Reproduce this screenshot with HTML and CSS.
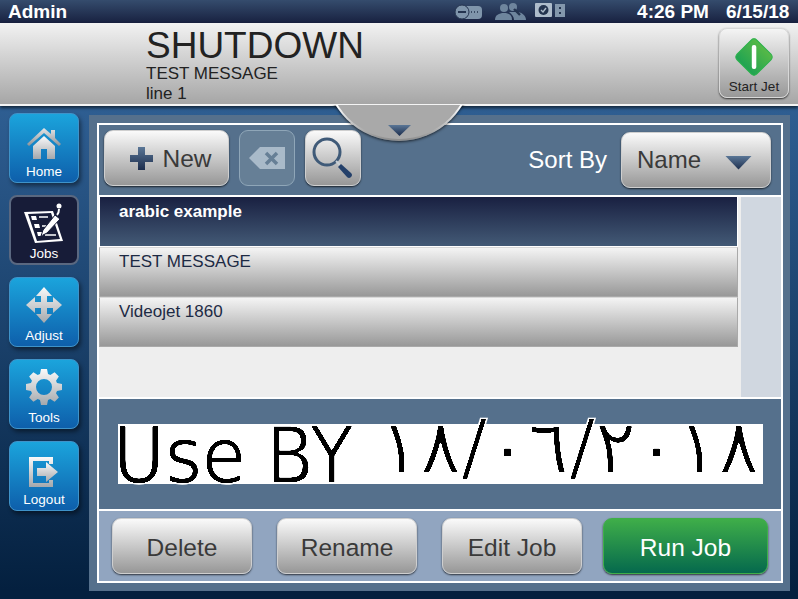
FILE: index.html
```html
<!DOCTYPE html>
<html lang="en">
<head>
    <meta charset="UTF-8">
    <title>Jobs</title>
    <link rel="stylesheet" href="styles.css">
</head>
<body>
    <svg class="defs" aria-hidden="true">
        <defs>
            <linearGradient id="silver" x1="0" y1="0" x2="0" y2="1">
                <stop offset="0" stop-color="#fafafa"/>
                <stop offset="1" stop-color="#a4a8ac"/>
            </linearGradient>
            <linearGradient id="roof" x1="0" y1="0" x2="0" y2="1">
                <stop offset="0" stop-color="#e4e6e8"/>
                <stop offset="1" stop-color="#8e9398"/>
            </linearGradient>
            <linearGradient id="navy" x1="0" y1="0" x2="0" y2="1">
                <stop offset="0" stop-color="#5a7696"/>
                <stop offset="1" stop-color="#1b2c4c"/>
            </linearGradient>
            <linearGradient id="jet" x1="0" y1="0" x2="0" y2="1">
                <stop offset="0" stop-color="#57b947"/>
                <stop offset="1" stop-color="#1fa352"/>
            </linearGradient>
        </defs>
    </svg>

    <div class="topbar">
        <span class="user">Admin</span>
        <div class="status-icons">
            <svg width="32" height="16" viewBox="0 0 32 16">
                <rect x="8" y="2" width="20" height="13" rx="4" fill="#7f95ab"/>
                <circle cx="8" cy="8" r="7" fill="#7f95ab" stroke="#24344f"/>
                <rect x="4" y="7" width="8" height="2" fill="#24344f"/>
                <path d="M17 8h1M20 8h1M23 8h1M30 8h1" stroke="#24344f" stroke-width="1.400"/>
            </svg>
            <svg width="33" height="18" viewBox="0 0 33 18">
                <circle cx="10" cy="5" r="4" fill="#6e859d"/>
                <path d="M1 17c0-5 4-7 9-7s8 2 8 7z" fill="#6e859d"/>
                <circle cx="19" cy="4" r="4" fill="#6e859d"/>
                <path d="M15 9h9c5 1 8 4 8 8H20c0-3-2-6-5-8z" fill="#6e859d"/>
                <path d="M20 6l6 6" stroke="#24344f" stroke-width="2.400"/>
            </svg>
            <svg class="printer-state" width="31" height="15" viewBox="0 0 31 15">
                <rect x="0" y="0" width="17" height="14" rx="1" fill="#aebccb"/>
                <circle cx="8.500" cy="7" r="5" fill="#24344f"/>
                <path d="M6 7l2 2 3-4" stroke="#aebccb" stroke-width="1.400" fill="none"/>
                <rect x="20" y="1" width="10" height="13" fill="#8397ac"/>
                <rect x="24" y="4" width="2" height="2" fill="#24344f"/>
                <rect x="24" y="9" width="2" height="2" fill="#24344f"/>
            </svg>
        </div>
        <span class="clock">4:26 PM</span>
        <span class="date">6/15/18</span>
    </div>

    <div class="header">
        <div class="state">
            <div class="state-title">SHUTDOWN</div>
            <div class="state-line">TEST MESSAGE</div>
            <div class="state-line">line 1</div>
        </div>
        <button class="jet-btn">
            <svg width="42" height="42" viewBox="0 0 42 42">
                <rect x="7" y="7" width="28" height="28" rx="4" transform="rotate(45 21 21)" fill="url(#jet)" stroke="#2bb24c"/>
                <rect x="18.800" y="9" width="4.500" height="24" rx="2" fill="#fff"/>
            </svg>
            <span>Start Jet</span>
        </button>
    </div>

    <div class="main">
        <nav class="sidebar">
            <a class="nav-btn">
                <svg width="34" height="31" viewBox="0 0 34 31">
                    <path d="M17 0L24 6V2h4v8l6 6-2 2L17 5 2 18l-2-2z" fill="url(#roof)"/>
                    <path d="M6 18L17 8l11 10v13h-8V21h-6v10H6z" fill="url(#silver)"/>
                </svg>
                <span>Home</span>
            </a>
            <a class="nav-btn active">
                <svg width="40" height="42" viewBox="0 0 40 42">
                    <path d="M0 9L29 8 39 38 11 40z" fill="#fff"/>
                    <path d="M4 11L27 10 36 36 13 38z" fill="#171c38"/>
                    <path d="M7 13h5l1 4H8zM10 21h5l1 4h-5zM13 29h5l1 4h-5z" fill="#fff"/>
                    <path d="M15 14h9M18 23h5M21 32h11" stroke="#fff" stroke-width="1.500"/>
                    <path d="M19 27L31 12l5 4-13 14-6 3z" fill="#fff" stroke="#171c38"/>
                    <path d="M33 12c2-2 2-4 2-6" stroke="#fff" stroke-width="2" fill="none"/>
                    <circle cx="35" cy="3" r="2.500" fill="#fff"/>
                </svg>
                <span>Jobs</span>
            </a>
            <a class="nav-btn">
                <svg width="36" height="36" viewBox="0 0 36 36">
                    <path d="M18 0l8 9h-5v6h6v-5l9 8-9 8v-5h-6v6h5l-8 9-8-9h5v-6H9v5l-9-8 9-8v5h6V9h-5z" fill="url(#silver)"/>
                </svg>
                <span>Adjust</span>
            </a>
            <a class="nav-btn">
                <svg width="36" height="36" viewBox="0 0 36 36">
                    <path fill-rule="evenodd" fill="url(#silver)" d="M14 5L15 0h6l1 5 2.360.980 4.240-2.830 4.250 4.250-2.830 4.240L31 14l5 1v6l-5 1-.980 2.360 2.830 4.240-4.250 4.250-4.240-2.830L22 31l-1 5h-6l-1-5-2.360-.980-4.240 2.830-4.250-4.250 2.830-4.240L5 22l-5-1v-6l5-1 .980-2.360-2.830-4.240L7.400 3.150l4.240 2.830zM18 10a8 8 0 1 0 0 16a8 8 0 1 0 0-16z"/>
                </svg>
                <span>Tools</span>
            </a>
            <a class="nav-btn">
                <svg width="30" height="30" viewBox="0 0 30 30">
                    <path d="M0 0h24v7h-4V4H4v22h16v-3h4v7H0z" fill="url(#silver)"/>
                    <path d="M8 11h9V5l12 10-12 10v-6H8z" fill="url(#silver)"/>
                </svg>
                <span>Logout</span>
            </a>
        </nav>

        <div class="panel">
            <div class="frame">
                <div class="toolbar">
                    <button class="btn btn-new">
                        <svg width="24" height="24" viewBox="0 0 24 24">
                            <path d="M8 0h7v8h8v7h-8v8H8v-8H0V8h8z" fill="url(#navy)"/>
                        </svg>
                        <span>New</span>
                    </button>
                    <button class="btn btn-clear">
                        <svg width="36" height="23" viewBox="0 0 36 23">
                            <path d="M11 0h25v22H11L0 11z" fill="#a9bac9"/>
                            <path d="M17 6l11 11M28 6L17 17" stroke="#667f96" stroke-width="3.500"/>
                        </svg>
                    </button>
                    <button class="btn btn-search">
                        <svg width="44" height="44" viewBox="0 0 44 44">
                            <circle cx="16" cy="16" r="13" fill="none" stroke="#3f5a78" stroke-width="3"/>
                            <path d="M25 25l4 4" stroke="#c9d0d6" stroke-width="2"/>
                            <path d="M30 28l10 9a2.800 2.800 0 0 1-4 4l-9-10z" fill="#24406a"/>
                        </svg>
                    </button>
                    <label class="sort-label">Sort By</label>
                    <button class="btn btn-sort">
                        <span>Name</span>
                        <i class="arrow"></i>
                    </button>
                </div>

                <div class="job-area">
                    <div class="job-list">
                        <div class="job selected">arabic example</div>
                        <div class="job">TEST MESSAGE</div>
                        <div class="job">Videojet 1860</div>
                    </div>
                    <div class="scroll-track"></div>
                </div>

                <div class="preview">
                    <div class="print-band">
                        <div class="print-word print-use">Use</div>
                        <div class="print-word print-by">BY</div>
                        <div class="print-word print-date">١٨/٠٦/٢٠١٨</div>
                    </div>
                </div>

                <div class="actions">
                    <button class="btn btn-action">Delete</button>
                    <button class="btn btn-action">Rename</button>
                    <button class="btn btn-action">Edit Job</button>
                    <button class="btn btn-run">Run Job</button>
                </div>
            </div>
        </div>
    </div>

    <div class="drop">
        <div class="drop-circle"></div>
        <i class="drop-arrow"></i>
    </div>
</body>
</html>
```

FILE: styles.css
```css
* {
    box-sizing: border-box;
}
body {
    margin: 0;
    width: 798px;
    height: 599px;
    overflow: hidden;
    position: relative;
    font-family: "Liberation Sans", Arial, sans-serif;
    background: linear-gradient(#2f5f93 100px, #04203f 590px);
}
.defs {
    position: absolute;
    width: 0;
    height: 0;
}
button {
    font-family: inherit;
    padding: 0;
}

.topbar {
    height: 23px;
    display: flex;
    align-items: center;
    padding: 0 8px;
    background: linear-gradient(#354c6d, #182140);
    color: #fff;
    font-size: 19px;
    font-weight: bold;
}
.status-icons {
    display: flex;
    align-items: center;
    gap: 8px;
    margin-left: 387px;
    width: 183px;
}
.printer-state {
    margin-top: -3px;
}
.date {
    margin-left: 17px;
}

.header {
    height: 83px;
    display: flex;
    justify-content: space-between;
    padding: 5px 9px 0 146px;
    background: linear-gradient(#f2f2f2, #a6a6a6);
    border-bottom: 2px solid #f4f4f4;
    box-shadow: 0 2px 3px rgba(0, 0, 0, 0.6);
    position: relative;
}
.state {
    color: #222;
}
.state-title {
    font-size: 37px;
    line-height: 35px;
    margin-bottom: 1px;
}
.state-line {
    font-size: 17px;
    line-height: 20px;
}
.jet-btn {
    width: 70px;
    height: 70px;
    display: flex;
    flex-direction: column;
    align-items: center;
    border: 1px solid #d8d8d8;
    border-radius: 8px;
    background: linear-gradient(#f4f4f4, #989898);
    box-shadow: 0 1px 2px rgba(0, 0, 0, 0.7);
    color: #222;
    font-size: 13.500px;
    line-height: 14px;
    padding-top: 7px;
}
.jet-btn span {
    margin-top: 2px;
    white-space: nowrap;
}

.main {
    display: flex;
    padding-top: 7px;
}
.sidebar {
    width: 89px;
    display: flex;
    flex-direction: column;
    gap: 12px;
    padding: 0 10px 0 9px;
}
.nav-btn {
    height: 70px;
    display: flex;
    flex-direction: column;
    align-items: center;
    justify-content: flex-end;
    padding-bottom: 2px;
    border: 1px solid #3f93c9;
    border-radius: 8px;
    background: linear-gradient(#1ba4dc, #0e5fab);
    box-shadow: 2px 3px 4px rgba(0, 0, 0, 0.45);
    color: #fff;
    font-size: 13.500px;
    line-height: 16px;
}
.nav-btn svg {
    margin-bottom: 5px;
}
.nav-btn.active {
    background: #171c38;
    border: 2px solid #5a6880;
    box-shadow: none;
    padding-bottom: 1px;
}
.nav-btn.active svg {
    margin-bottom: 1px;
}

.panel {
    width: 701px;
    height: 476px;
    margin-top: 2px;
    padding: 8px 7px 8px 8px;
    background: #55708c;
}
.frame {
    height: 460px;
    border: 2px solid #fff;
    display: flex;
    flex-direction: column;
}
.toolbar {
    height: 72px;
    display: flex;
    align-items: flex-start;
    padding: 5px 10px 0 5px;
    border-bottom: 2px solid #fff;
}
.btn {
    border: 1px solid #cfcfcf;
    border-radius: 9px;
    background: linear-gradient(#fafafa, #979797);
    box-shadow: 0 1px 2px rgba(0, 0, 0, 0.7);
    color: #3a3a3a;
    font-size: 24.500px;
}
.btn-new {
    width: 125px;
    height: 56px;
    display: flex;
    align-items: center;
    justify-content: center;
    gap: 8px;
    padding: 1px 0 0 9px;
}
.btn-clear {
    width: 56px;
    height: 56px;
    margin-left: 10px;
    background: #667f96;
    border-color: #8fa6b8;
    box-shadow: none;
    display: flex;
    align-items: center;
    justify-content: center;
}
.btn-search {
    width: 56px;
    height: 56px;
    margin-left: 10px;
    display: flex;
    align-items: center;
    justify-content: center;
}
.sort-label {
    margin-left: auto;
    margin-top: 16px;
    color: #fff;
    font-size: 24px;
    line-height: 28px;
}
.btn-sort {
    width: 150px;
    height: 56px;
    margin-left: 14px;
    margin-top: 2px;
    display: flex;
    align-items: center;
    justify-content: space-between;
    padding: 0 18px 0 15px;
    font-size: 24px;
}
.arrow {
    width: 27px;
    height: 14px;
    margin-top: 5px;
    background: linear-gradient(#5a7696, #1b2c4c);
    clip-path: polygon(0 0, 100% 0, 50% 100%);
}

.job-area {
    height: 202px;
    display: flex;
    background: #eeeeee;
    border-bottom: 2px solid #fff;
}
.job-list {
    flex: 1;
}
.job {
    height: 50px;
    margin-right: 3px;
    border: 1px solid #a9a9a9;
    border-top-color: #d8d8d8;
    padding: 4px 19px;
    background: linear-gradient(#f4f4f4, #989898);
    color: #1d2a44;
    font-size: 17px;
    line-height: 20px;
}
.job.selected {
    border: 1px solid #fff;
    border-top: 0;
    padding-top: 5px;
    background: linear-gradient(#192041, #435a76);
    color: #fff;
    font-weight: bold;
}
.scroll-track {
    width: 40px;
    background: #d0d7e0;
}

.preview {
    height: 112px;
    padding: 25px 19px 0 19px;
    border-bottom: 2px solid #fff;
}
.print-band {
    width: 645px;
    height: 60px;
    display: flex;
    align-items: flex-start;
    background: #fff;
    /* hard edges, the preview is a 1-bit raster */
    filter: contrast(6);
}
.print-word {
    font-family: "DejaVu Sans", sans-serif;
    font-size: 78px;
    line-height: 64px;
    color: #000;
    white-space: nowrap;
    -webkit-text-stroke: 1.500px #fff;
    transform-origin: 0 0;
}
.print-use {
    width: 126px;
    margin: 0 27px 0 -5px;
    transform: scaleX(0.91);
}
.print-by {
    width: 79px;
    margin-right: 34px;
    transform: scaleX(0.9);
}
.print-date {
    width: 370px;
    font-size: 75px;
    line-height: 46px;
    letter-spacing: 6.800px;
    direction: ltr;
    unicode-bidi: bidi-override;
    transform: scaleX(1.02);
}

.actions {
    flex: 1;
    display: flex;
    align-items: flex-start;
    padding: 7px 13px 0 13px;
    background: #91a5c0;
}
.btn-action {
    width: 140px;
    height: 56px;
    margin-right: 25px;
    padding-top: 3px;
}
.btn-action:nth-child(3) {
    margin-right: 21px;
}
.btn-run {
    width: 165px;
    height: 56px;
    padding-top: 3px;
    border-color: #3fae49;
    background: linear-gradient(#3fae49, #05694d);
    color: #fff;
}

.drop {
    position: absolute;
    left: 325px;
    top: 105px;
    width: 148px;
    height: 42px;
    overflow: hidden;
}
.drop-circle {
    position: absolute;
    left: 0;
    top: -112px;
    width: 148px;
    height: 148px;
    border: 2px solid transparent;
    border-radius: 50%;
    background: linear-gradient(#a9a9a9, #a9a9a9) padding-box, linear-gradient(#fff 76%, #8a8a8a) border-box;
    box-shadow: 0 1px 3px rgba(0, 0, 0, 0.7);
}
.drop-arrow {
    position: absolute;
    left: 63px;
    top: 20px;
    width: 23px;
    height: 11px;
    background: linear-gradient(#5a7696, #1b2c4c);
    clip-path: polygon(0 0, 100% 0, 50% 100%);
}
```
